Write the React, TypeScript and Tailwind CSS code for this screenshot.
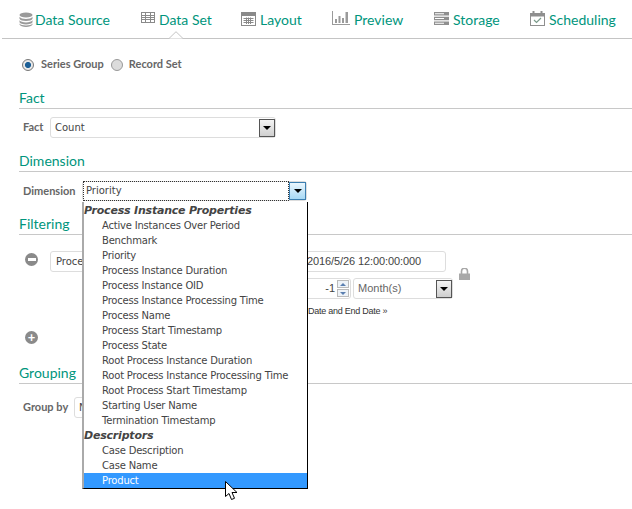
const lato = "font-['Lato','Open_Sans',sans-serif]"

function DbIcon() {
  return (
    <svg width="14" height="15" viewBox="0 0 14 15" fill="#9a9a9a">
      <ellipse cx="7" cy="3" rx="6.5" ry="2.6" />
      <path d="M.5 4.8C1.5 6.4 4 7 7 7s5.5-.6 6.5-2.2v2C13 8.400 10 9 7 9S1 8.400.5 6.800z" />
      <path d="M.5 8.300C1.500 9.800 4 10.400 7 10.400s5.500-.6 6.500-2.100v2C13 11.800 10 12.400 7 12.400S1 11.800.5 10.300z" />
      <path d="M.5 11.600C1.500 13 4 13.500 7 13.500s5.500-.5 6.500-1.900v1C13 14.200 10 15 7 15s-6-.8-6.500-2.400z" />
    </svg>
  )
}

function GridIcon() {
  return (
    <svg className="mb-[3px]" width="14" height="11" viewBox="0 0 14 11" fill="none" stroke="#8a8a8a">
      <rect x=".5" y=".5" width="13" height="10" />
      <path d="M.5 3.500h13M.5 5.500h13M.5 7.500h13M4.500 .5v10M9.500 .5v10" />
    </svg>
  )
}

function CalcIcon() {
  return (
    <svg width="15" height="14" viewBox="0 0 15 14" fill="none" stroke="#8a8a8a">
      <rect x=".5" y=".5" width="14" height="13" />
      <path d="M1 2.500h13" strokeWidth="3" />
      <path d="M2.500 6.500h10M2.500 8.500h10M2.500 10.500h10M5.500 5.500v6.500M7.500 5.500v6.500M9.500 5.500v6.500" />
    </svg>
  )
}

function BarsIcon() {
  return (
    <svg className="mb-[2px]" width="18" height="14" viewBox="0 0 18 14" fill="#9a9a9a">
      <path d="M0 0h1v13h17v1H0z" />
      <path d="M3 8h2v4H3zM6.500 5h2v7h-2zM10 7h2v5h-2zM13.500 1h2.500v11h-2.500z" />
    </svg>
  )
}

function ServerIcon() {
  return (
    <svg className="mb-[2px]" width="15" height="13" viewBox="0 0 15 13" fill="#8f8f8f">
      <path d="M0 0h15v3.500H0zM0 4.700h15v3.500H0zM0 9.400h15V13H0z" />
      <path d="M1 1.300h9v1H1zM1 6h9v1H1zM1 10.700h9v1H1z" fill="#fff" />
    </svg>
  )
}

function CalendarIcon() {
  return (
    <svg className="mb-[2px]" width="15" height="15" viewBox="0 0 15 15" fill="none" stroke="#8f8f8f">
      <rect x=".5" y="2.500" width="14" height="12" />
      <path d="M1 4h13" strokeWidth="3" />
      <path d="M3.500 0v3M11.500 0v3" strokeWidth="2" />
      <path d="M4 9l2.500 2.500L11 7" stroke="#7a9a8a" strokeWidth="1.200" />
    </svg>
  )
}

function Tab({ icon, label, active, className }: { icon: React.ReactNode; label: string; active?: boolean; className: string }) {
  return (
    <div className={`relative flex h-[38px] items-center ${className}`}>
      {icon}
      <span className="text-[14px] text-[#00957c]">{label}</span>
      {active && (
        <svg className="absolute -bottom-px left-[27px]" width="16" height="8" viewBox="0 0 16 8">
          <path d="M0 7.500h1L8 .7l7 6.800h1" fill="#fff" stroke="#c4c4c4" />
        </svg>
      )}
    </div>
  )
}

function Heading({ children }: { children: string }) {
  return (
    <div className="ml-[19px] border-b border-[#c8c8c8] text-[14px] leading-[20px] text-[#00957c]">{children}</div>
  )
}

function Arrow({ focused }: { focused?: boolean }) {
  return (
    <span
      className={
        focused
          ? "flex h-[18px] w-[17px] items-center justify-center border border-[#3c7fb1] bg-gradient-to-b from-[#eaf6fd] to-[#a7d9f5]"
          : "flex h-[18px] w-[16px] items-center justify-center border border-[#555] bg-gradient-to-b from-[#f4f4f4] to-[#cfcfcf]"
      }
    >
      <span className="h-0 w-0 border-x-[4px] border-t-[4px] border-x-transparent border-t-black" />
    </span>
  )
}

const label = "text-[11px] font-bold text-[#666]"
const field = "flex items-center rounded-[3px] border border-[#ddd] bg-white text-[#444]"

const groups = [
  {
    name: "Process Instance Properties",
    items: [
      "Active Instances Over Period",
      "Benchmark",
      "Priority",
      "Process Instance Duration",
      "Process Instance OID",
      "Process Instance Processing Time",
      "Process Name",
      "Process Start Timestamp",
      "Process State",
      "Root Process Instance Duration",
      "Root Process Instance Processing Time",
      "Root Process Start Timestamp",
      "Starting User Name",
      "Termination Timestamp",
    ],
  },
  { name: "Descriptors", items: ["Case Description", "Case Name", "Product"] },
]

function Dropdown() {
  return (
    <div className="absolute left-0 top-[21px] z-10 w-[226px] border-b border-l-2 border-r border-b-black border-l-[#aaa] border-r-black bg-white pt-px font-['DejaVu_Sans',sans-serif] text-[10px] tracking-[-0.2px] text-[#444]">
      {groups.map((g) => (
        <div key={g.name}>
          <div className="h-[15px] text-[11px] font-bold italic leading-[15px] text-[#444]">{g.name}</div>
          {g.items.map((item) => (
            <div
              key={item}
              className={
                item === "Product"
                  ? "h-[15px] bg-[#3399ff] pl-[18px] leading-[15px] text-white"
                  : "h-[15px] pl-[18px] leading-[15px]"
              }
            >
              {item}
            </div>
          ))}
        </div>
      ))}
    </div>
  )
}

export default function App() {
  return (
    <div className={`relative h-[509px] w-[632px] overflow-hidden bg-white ${lato}`}>
      <header className="ml-[2px] flex h-[39px] border-b border-[#c4c4c4] pl-[17px]">
        <Tab className="w-[122px] gap-[2px]" icon={<DbIcon />} label="Data Source" />
        <Tab className="w-[100px] gap-[4px]" icon={<GridIcon />} label="Data Set" active />
        <Tab className="w-[91px] gap-[4px]" icon={<CalcIcon />} label="Layout" />
        <Tab className="w-[102px] gap-[4px]" icon={<BarsIcon />} label="Preview" />
        <Tab className="w-[96px] gap-[4px]" icon={<ServerIcon />} label="Storage" />
        <Tab className="gap-[4px]" icon={<CalendarIcon />} label="Scheduling" />
      </header>

      <div className="flex h-[49px] items-center pl-[22px] pt-[2px]">
        <span className="mr-[7px] h-[12px] w-[12px] rounded-full border border-[#777] bg-[radial-gradient(circle,#1c5f96_0%,#1c5f96_38%,#e8e8e8_48%)]" />
        <span className={label}>Series Group</span>
        <span className="ml-[7px] mr-[6px] h-[12px] w-[12px] rounded-full border border-[#999] bg-[#dcdcdc]" />
        <span className={label}>Record Set</span>
      </div>

      <Heading>Fact</Heading>
      <div className="flex h-[37px] items-center pl-[23px]">
        <span className={`${label} w-[27px]`}>Fact</span>
        <div className={`${field} h-[21px] w-[226px] justify-between pl-[4px] font-['DejaVu_Sans',sans-serif] text-[10px]`}>
          Count
          <Arrow />
        </div>
      </div>

      <div className="pt-[5px]">
        <Heading>Dimension</Heading>
      </div>
      <div className="flex h-[38px] items-center pl-[23px]">
        <span className={`${label} w-[59px]`}>Dimension</span>
        <div className="relative">
          <div className={`${field} h-[20px] w-[225px] justify-between`}>
            <span className="flex h-[20px] w-[206px] items-center border border-dotted border-[#333] pb-px pl-[2px] font-['DejaVu_Sans',sans-serif] text-[10px]">
              Priority
            </span>
            <Arrow focused />
          </div>
          <Dropdown />
        </div>
      </div>

      <div className="pt-[4px]">
        <Heading>Filtering</Heading>
      </div>
      <div className="relative h-[128px]">
        <div className="absolute left-[25px] top-[18px] flex h-[13px] w-[13px] items-center justify-center rounded-full bg-[#8a8a8a]">
          <span className="h-[3px] w-[8px] bg-white" />
        </div>
        <div className={`${field} absolute left-[50px] top-[16px] h-[21px] w-[396px] justify-between pl-[5px] pr-[9px] font-['Liberation_Sans',sans-serif] text-[11px]`}>
          <span className="font-['DejaVu_Sans',sans-serif] text-[10px]">Proce</span>
          <span className="w-[129px] tracking-[-0.1px] text-[#444]">2016/5/26 12:00:00:000</span>
        </div>
        <svg className="absolute left-[459px] top-[33px]" width="11" height="12" viewBox="0 0 11 12" fill="#a8a8a8">
          <path d="M0 5.500h11V12H0z" />
          <path d="M2.500 6V3.300a3 3 0 0 1 6 0V6" fill="none" stroke="#a8a8a8" strokeWidth="1.600" />
        </svg>
        <div className={`${field} absolute left-[300px] top-[43px] h-[21px] w-[51px] justify-end pr-px font-['Liberation_Sans',sans-serif] text-[11px]`}>
          <span className="mr-[2px]">-1</span>
          <span className="flex h-[17px] w-[12px] flex-col gap-px">
            <span className="flex h-[8px] items-center justify-center border border-[#bbb] bg-[#eef3f8]">
              <span className="h-0 w-0 border-x-[3px] border-b-[3px] border-x-transparent border-b-[#5a7fb0]" />
            </span>
            <span className="flex h-[8px] items-center justify-center border border-[#bbb] bg-[#eef3f8]">
              <span className="h-0 w-0 border-x-[3px] border-t-[3px] border-x-transparent border-t-[#5a7fb0]" />
            </span>
          </span>
        </div>
        <div className={`${field} absolute left-[353px] top-[43px] h-[21px] w-[100px] justify-between pl-[4px] font-['Liberation_Sans',sans-serif] text-[11px] text-[#666]`}>
          Month(s)
          <Arrow />
        </div>
        <span className="absolute left-[308px] top-[70px] font-['Liberation_Sans',sans-serif] text-[9px] leading-[12px] tracking-[-0.25px] text-[#333]">
          Date and End Date »
        </span>
        <div className="absolute left-[25px] top-[96px] flex h-[13px] w-[13px] items-center justify-center rounded-full bg-[#8a8a8a]">
          <span className="text-[13px] font-bold leading-[13px] text-white">+</span>
        </div>
      </div>

      <Heading>Grouping</Heading>
      <div className="flex h-[47px] items-center pl-[23px]">
        <span className={`${label} w-[51px]`}>Group by</span>
        <div className={`${field} h-[21px] w-[30px] pl-[4px] font-['DejaVu_Sans',sans-serif] text-[10px]`}>N</div>
      </div>

      {/* mouse pointer */}
      <svg className="absolute left-[225px] top-[481px] z-20" width="13" height="20" viewBox="0 0 13 20">
        <path d="M.5.500v15l3.500-3 2.500 6 3-1.200-2.500-5.800h5z" fill="#fff" stroke="#000" />
      </svg>
    </div>
  )
}
